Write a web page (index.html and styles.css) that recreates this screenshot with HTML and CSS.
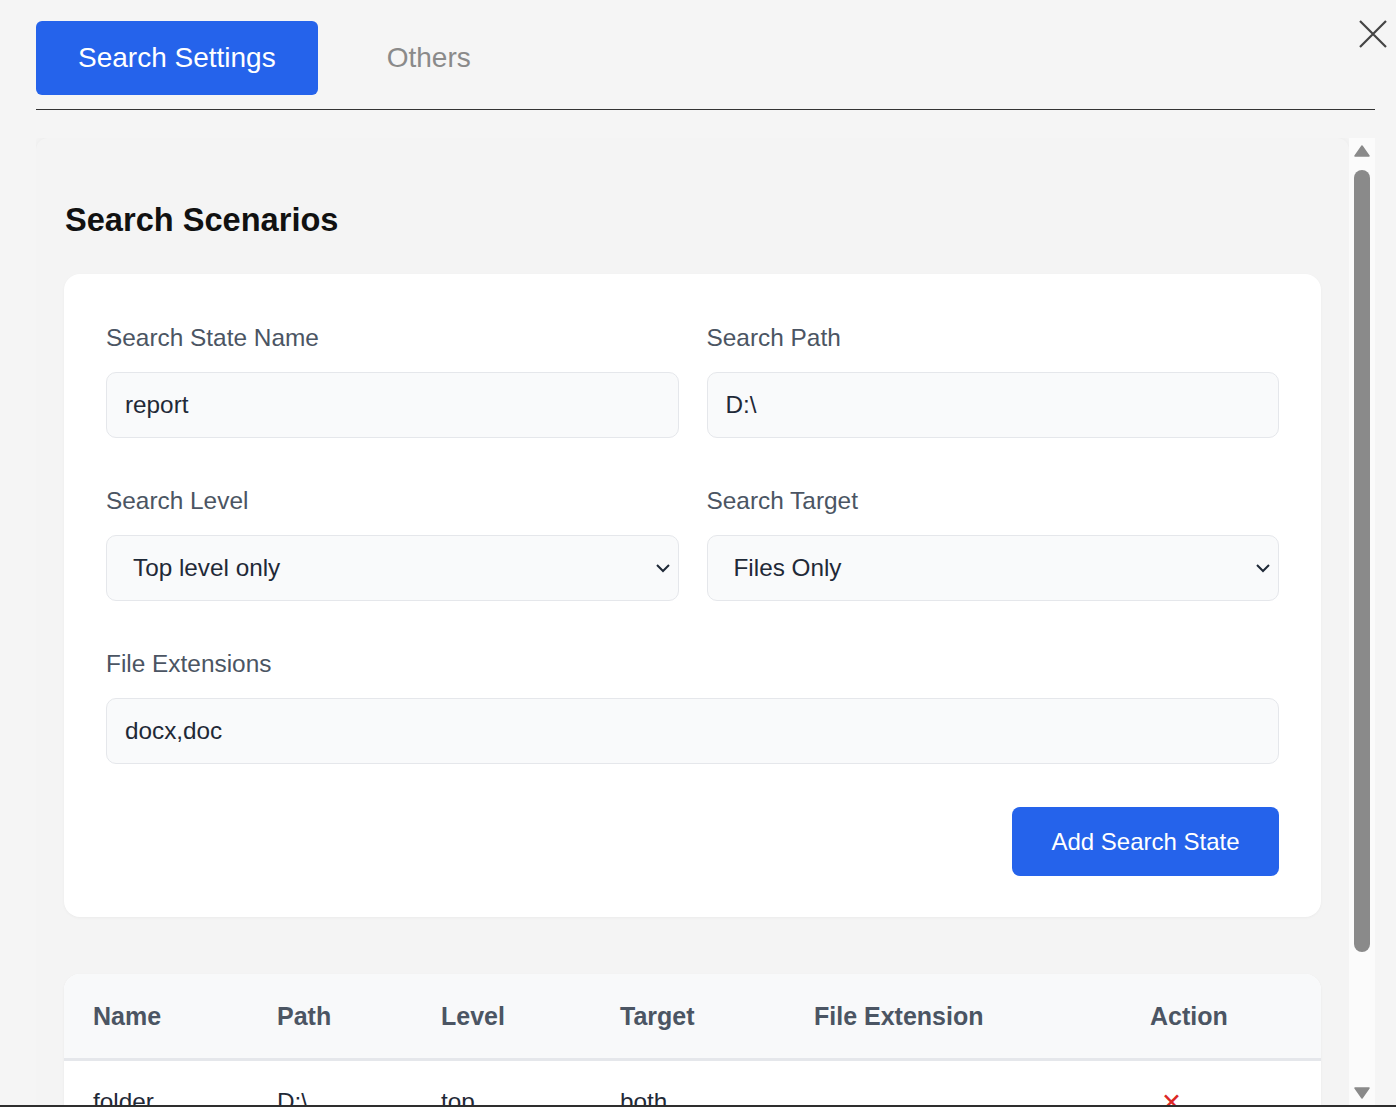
FILE: index.html
```html
<!DOCTYPE html>
<html lang="en">
<head>
<meta charset="utf-8">
<title>Search Settings</title>
<link rel="stylesheet" href="styles.css">
</head>
<body>
<div class="app">
  <header class="tabs">
    <button class="tab tab-active" type="button">Search Settings</button>
    <button class="tab" type="button">Others</button>
  </header>
  <button class="close" type="button" aria-label="Close">
    <svg width="30" height="30" viewBox="0 0 30 30"><path d="M2 2 L28 28 M28 2 L2 28" stroke="#444" stroke-width="2.2" fill="none"/></svg>
  </button>
  <div class="content-area">
    <div class="viewport">
      <section class="panel">
        <h2 class="panel-title">Search Scenarios</h2>
        <form class="form-card">
          <div class="form-grid">
            <div class="field">
              <label class="label">Search State Name</label>
              <div class="input">report</div>
            </div>
            <div class="field">
              <label class="label">Search Path</label>
              <div class="input">D:\</div>
            </div>
            <div class="field">
              <label class="label">Search Level</label>
              <div class="input select">Top level only
                <svg class="chev" width="16" height="10" viewBox="0 0 16 10"><path d="M2 2 L8 8 L14 2" stroke="#1f2937" stroke-width="2" fill="none"/></svg>
              </div>
            </div>
            <div class="field">
              <label class="label">Search Target</label>
              <div class="input select">Files Only
                <svg class="chev" width="16" height="10" viewBox="0 0 16 10"><path d="M2 2 L8 8 L14 2" stroke="#1f2937" stroke-width="2" fill="none"/></svg>
              </div>
            </div>
            <div class="field field-wide">
              <label class="label">File Extensions</label>
              <div class="input">docx,doc</div>
            </div>
          </div>
          <div class="actions">
            <button class="primary" type="button">Add Search State</button>
          </div>
        </form>
        <div class="table-card">
          <div class="trow thead">
            <div class="cell">Name</div>
            <div class="cell">Path</div>
            <div class="cell">Level</div>
            <div class="cell">Target</div>
            <div class="cell">File Extension</div>
            <div class="cell">Action</div>
          </div>
          <div class="trow tbody-row">
            <div class="cell">folder</div>
            <div class="cell">D:\</div>
            <div class="cell">top</div>
            <div class="cell">both</div>
            <div class="cell"></div>
            <div class="cell"><span class="del">✕</span></div>
          </div>
          <div class="trow tbody-row">
            <div class="cell">report</div>
            <div class="cell">D:\</div>
            <div class="cell">top</div>
            <div class="cell">files</div>
            <div class="cell">docx,doc</div>
            <div class="cell"><span class="del">✕</span></div>
          </div>
        </div>
      </section>
    </div>
    <div class="scrollbar">
      <svg class="arrow" width="16" height="12" viewBox="0 0 16 12"><path d="M8 1 L15 11 L1 11 Z" fill="#8a8a8a" stroke="#8a8a8a" stroke-width="1.5" stroke-linejoin="round"/></svg>
      <div class="thumb"></div>
      <svg class="arrow arrow-down" width="16" height="12" viewBox="0 0 16 12"><path d="M1 1 L15 1 L8 11 Z" fill="#8a8a8a" stroke="#8a8a8a" stroke-width="1.5" stroke-linejoin="round"/></svg>
    </div>
  </div>
</div>
<div class="taskbar"></div>
</body>
</html>
```
FILE: styles.css
```css
* { box-sizing: border-box; }
html, body {
  margin: 0;
  height: 100%;
  overflow: hidden;
  background: #f5f5f5;
  font-family: "Liberation Sans", Arial, sans-serif;
}
.app {
  position: relative;
  height: 100vh;
  display: flex;
  flex-direction: column;
  padding: 21px 21px 0 36px;
}
.tabs {
  display: flex;
  gap: 27px;
  padding-bottom: 14px;
  border-bottom: 1px solid #333;
}
.tab {
  height: 74px;
  padding: 0 42px 0 42px;
  border: none;
  border-radius: 6px;
  background: transparent;
  color: #8a8a8a;
  font-family: inherit;
  font-size: 28px;
}
.tab-active {
  background: #2563eb;
  color: #fff;
}
.close {
  position: absolute;
  top: 19px;
  right: 8px;
  width: 30px;
  height: 30px;
  padding: 0;
  border: none;
  background: transparent;
}
.close svg { display: block; }
.content-area {
  flex: 1;
  min-height: 0;
  display: flex;
  margin-top: 28px;
}
.viewport {
  flex: 1;
  min-width: 0;
  overflow: hidden;
}
.panel {
  background: #f4f4f4;
  border-radius: 12px 12px 0 0;
  box-shadow: 0 0 8px rgba(0,0,0,0.06);
  padding: 28px 28px 40px;
}
.panel-title {
  margin: 34px 0 34px 1px;
  font-size: 32.6px;
  line-height: 40px;
  font-weight: 700;
  color: #111;
}
.form-card {
  background: #fff;
  border-radius: 16px;
  padding: 46px 42px 41px;
  box-shadow: 0 1px 3px rgba(0,0,0,0.04);
}
.form-grid {
  display: grid;
  grid-template-columns: 1fr 1fr;
  column-gap: 28px;
  row-gap: 45px;
}
.field-wide { grid-column: 1 / -1; }
.label {
  display: block;
  font-size: 24.4px;
  line-height: 36px;
  color: #4b5563;
  margin: 0 0 16px 0;
}
.input {
  height: 66px;
  display: flex;
  align-items: center;
  padding: 0 18px;
  background: #f9fafb;
  border: 1px solid #e5e7eb;
  border-radius: 10px;
  font-size: 24.3px;
  color: #1f2937;
}
.select {
  padding-left: 26px;
  justify-content: space-between;
  padding-right: 7px;
}
.chev { display: block; }
.actions {
  display: flex;
  justify-content: flex-end;
  margin-top: 43px;
}
.primary {
  width: 267px;
  height: 69px;
  border: none;
  border-radius: 8px;
  background: #2563eb;
  color: #fff;
  font-family: inherit;
  font-size: 24px;
}
.table-card {
  margin-top: 57px;
  background: #fff;
  border-radius: 16px;
  overflow: hidden;
  box-shadow: 0 1px 3px rgba(0,0,0,0.05);
}
.trow {
  display: grid;
  grid-template-columns: 185px 164px 179px 194px 336px 1fr;
}
.cell {
  padding-left: 28px;
  font-size: 24.3px;
  line-height: 36px;
}
.cell:first-child { padding-left: 29px; }
.thead {
  background: #f8f9fa;
  border-bottom: 3px solid #e5e7eb;
  padding-top: 24px;
  padding-bottom: 24px;
}
.thead .cell {
  font-weight: 700;
  font-size: 25px;
  color: #4b5563;
}
.tbody-row {
  padding-top: 23px;
  padding-bottom: 23px;
  color: #1f2937;
  border-bottom: 1px solid #eee;
}
.del {
  display: inline-block;
  margin-left: 11px;
  color: #dc2626;
  font-size: 25px;
}
.scrollbar {
  width: 26px;
  flex: none;
  background: #fbfbfb;
  display: flex;
  flex-direction: column;
  align-items: center;
  padding: 7px 0 8px;
}
.arrow { display: block; flex: none; }
.thumb {
  width: 16px;
  height: 782px;
  margin-top: 13px;
  border-radius: 8px;
  background: #8a8a8a;
  flex: none;
}
.arrow-down { margin-top: auto; }
.taskbar {
  position: fixed;
  left: 0;
  right: 0;
  bottom: 0;
  height: 2px;
  background: #2e2e2e;
}
```
